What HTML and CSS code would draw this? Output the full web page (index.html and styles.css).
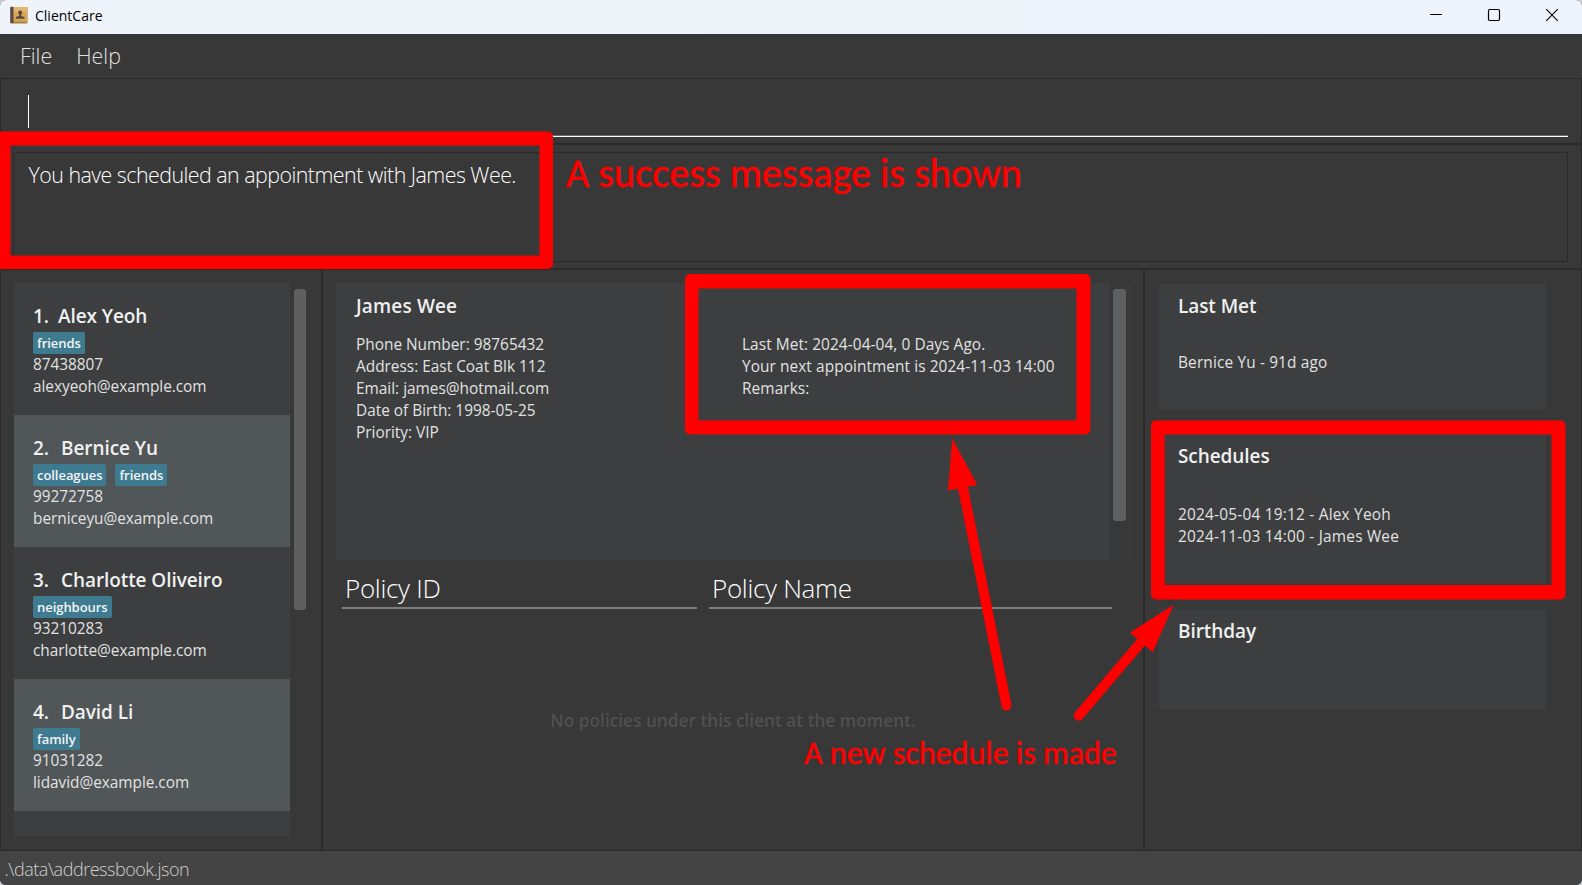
FILE: index.html
```html
<!DOCTYPE html>
<html lang="en">
<head>
<meta charset="utf-8">
<title>ClientCare</title>
<link rel="stylesheet" href="styles.css">
</head>
<body>
<div class="window">
  <header class="titlebar">
    <svg class="app-icon" width="18" height="18" viewBox="0 0 18 18">
      <rect x="0.5" y="1" width="17" height="16.5" rx="0.8" fill="#a87f45"/>
      <rect x="3" y="1" width="14.2" height="14.6" fill="#d9a657"/>
      <rect x="3" y="1" width="14.2" height="5" fill="#e3b56c"/>
      <rect x="0.3" y="0.8" width="3.2" height="16.2" fill="#574a47"/>
      <path d="M10.200 4.400c1.200 0 1.900.8 1.900 1.900 0 .9-.4 1.700-.9 2.100v1.500l3.300 1v1.900H5.900v-1.900l3.300-1V8.400c-.5-.4-.9-1.200-.9-2.100 0-1.100.7-1.900 1.900-1.900z" fill="#54493a"/>
    </svg>
    <span class="app-name">ClientCare</span>
    <div class="controls">
      <svg width="14" height="14" viewBox="0 0 14 14"><path d="M1 6.500h12" stroke="#000" fill="none"/></svg>
      <svg width="14" height="14" viewBox="0 0 14 14"><rect x="1.500" y="1.500" width="11" height="11" rx="1.200" stroke="#000" stroke-width="1.200" fill="none"/></svg>
      <svg width="14" height="14" viewBox="0 0 14 14"><path d="M1.200 1.200l11.600 11.600M12.800 1.200L1.200 12.800" stroke="#000" stroke-width="1.100" fill="none"/></svg>
    </div>
  </header>

  <nav class="menu"><span>File</span><span>Help</span></nav>

  <section class="command"><div class="command-field"><i class="caret"></i></div></section>

  <section class="result"><div class="result-box">You have scheduled an appointment with James Wee.</div></section>

  <main class="main">
    <section class="clients">
      <div class="client-list">
        <article class="client">
          <h2><span class="num num-narrow">1.</span>Alex Yeoh</h2>
          <div class="tags"><span>friends</span></div>
          <p>87438807</p><p>alexyeoh@example.com</p>
        </article>
        <article class="client alt">
          <h2><span class="num">2.</span>Bernice Yu</h2>
          <div class="tags"><span>colleagues</span><span>friends</span></div>
          <p>99272758</p><p>berniceyu@example.com</p>
        </article>
        <article class="client">
          <h2><span class="num">3.</span>Charlotte Oliveiro</h2>
          <div class="tags"><span>neighbours</span></div>
          <p>93210283</p><p>charlotte@example.com</p>
        </article>
        <article class="client alt">
          <h2><span class="num">4.</span>David Li</h2>
          <div class="tags"><span>family</span></div>
          <p>91031282</p><p>lidavid@example.com</p>
        </article>
        <article class="client"></article>
      </div>
      <div class="thumb"></div>
    </section>

    <section class="center">
      <div class="detail-row">
        <div class="detail">
          <h2>James Wee</h2>
          <div class="detail-cols">
            <div>
              <p>Phone Number: 98765432</p>
              <p>Address: East Coat Blk 112</p>
              <p>Email: james@hotmail.com</p>
              <p>Date of Birth: 1998-05-25</p>
              <p>Priority: VIP</p>
            </div>
            <div class="meeting">
              <p>Last Met: 2024-04-04, 0 Days Ago.</p>
              <p>Your next appointment is 2024-11-03 14:00</p>
              <p>Remarks:</p>
            </div>
          </div>
        </div>
        <div class="detail-scroll"><div class="thumb"></div></div>
      </div>
      <div class="table-head"><span>Policy ID</span><span>Policy Name</span></div>
      <div class="placeholder">No policies under this client at the moment.</div>
    </section>

    <aside class="side">
      <div class="card last-met"><h2>Last Met</h2><p>Bernice Yu - 91d ago</p></div>
      <div class="card schedules"><h2>Schedules</h2><p>2024-05-04 19:12 - Alex Yeoh</p><p>2024-11-03 14:00 - James Wee</p></div>
      <div class="card birthday"><h2>Birthday</h2></div>
    </aside>
  </main>

  <footer class="status">.\data\addressbook.json</footer>

  <svg class="marks" width="1582" height="885" viewBox="0 0 1582 885">
    <g fill="#f00" fill-rule="evenodd">
      <path d="M0 131.500H548a5 5 0 0 1 5 5V264a5 5 0 0 1-5 5H0zM10.500 145.500V255.500H539.500V145.500z"/>
      <path d="M690 274H1085.500a5 5 0 0 1 5 5V429.500a5 5 0 0 1-5 5H690a5 5 0 0 1-5-5V279a5 5 0 0 1 5-5zM698.500 288.500V420.500H1076.500V288.500z"/>
      <path d="M1156 420.500H1560.500a5 5 0 0 1 5 5V594.500a5 5 0 0 1-5 5H1156a5 5 0 0 1-5-5V425.500a5 5 0 0 1 5-5zM1164.700 434.500V585H1551.500V434.500z"/>
      <path d="M952.300 438.500L977.400 485L948 490.500z"/>
      <path d="M1173.600 604.800L1152.700 652.200L1130 632.500z"/>
    </g>
    <g stroke="#f00" stroke-width="10" stroke-linecap="round">
      <path d="M1006.500 705.500L962 483"/>
      <path d="M1078.700 715.700L1142.500 640.500"/>
    </g>
  </svg>
  <div class="note note-success">A success message is shown</div>
  <div class="note note-schedule">A new schedule is made</div>
</div>
</body>
</html>
```
FILE: styles.css
```css
* { box-sizing: border-box; margin: 0; padding: 0; }

body {
  background: #c9cdd0;
  font-family: "Open Sans", "Noto Sans", sans-serif;
}

.window {
  position: relative;
  width: 1582px;
  height: 885px;
  display: flex;
  flex-direction: column;
  overflow: hidden;
  background: #383838;
  border-radius: 6px;
}

.titlebar {
  height: 34px;
  display: flex;
  align-items: flex-start;
  padding-left: 10px;
  background: linear-gradient(90deg, #eef4f9, #eef3fb);
}
.app-icon { margin-top: 6px; }
.app-name { margin-left: 7px; font-size: 14px; line-height: 31px; color: #000; }
.controls { display: flex; gap: 44px; margin: 8px 23px 0 auto; }
.controls svg { display: block; }

.menu {
  height: 45px;
  display: flex;
  gap: 24px;
  padding-left: 20px;
  border-bottom: 1px solid #2a2a2a;
  font-size: 21.400px;
  font-weight: 300;
  line-height: 43px;
  color: #e0e0e0;
}

.command {
  height: 66px;
  padding: 0 13px 0 12px;
  border: solid #2a2a2a;
  border-width: 0 1px 2px 1px;
}
.command-field {
  height: 58px;
  padding: 16px 0 0 14.500px;
  border-bottom: 1px solid #fff;
  box-shadow: inset 0 -1px 0 #6a6a6a;
}
.caret { display: block; width: 1.400px; height: 33px; background: #fff; }

.result {
  height: 125px;
  padding: 7px 13px 6px 12px;
  border: solid #2a2a2a;
  border-width: 0 1px 2px 1px;
}
.result-box {
  height: 110px;
  padding: 7px 0 0 14.500px;
  border: 1px solid #2a2a2a;
  font-size: 21.400px;
  font-weight: 300;
  line-height: 30px;
  letter-spacing: -0.530px;
  color: #fff;
}

.main {
  height: 581px;
  display: grid;
  grid-template-columns: 323px 822px 1fr;
  border-bottom: 1px solid #2a2a2a;
}

h2 { font-size: 19px; font-weight: 600; line-height: 27px; color: #f0f0f0; letter-spacing: -0.080px; }
p { font-size: 15.400px; line-height: 22px; color: #e2e2e2; }

.clients {
  display: flex;
  gap: 4px;
  padding: 13px 0 0 13px;
  border: solid #2a2a2a;
  border-width: 0 2px 0 1px;
}
.client-list { width: 276px; height: 553px; overflow: hidden; }
.client { height: 132px; padding: 20px 0 0 19px; background: #3c3e3f; }
.client p { letter-spacing: -0.040px; }
.client.alt { background: #515658; }
.num { display: inline-block; width: 28px; }
.num-narrow { width: 25px; }
.tags { display: flex; gap: 9px; height: 22px; margin-top: 2px; }
.tags span {
  height: 22px;
  padding: 0 4px;
  border-radius: 2px;
  background: #3e7b91;
  color: #f4f4f4;
  font-size: 13px;
  font-weight: 600;
  line-height: 22px;
  letter-spacing: -0.050px;
}
.thumb { width: 12px; height: 321px; margin-top: 6px; border-radius: 3px; background: #5f5f5f; }

.center { padding: 13px 13px 0 13px; border-right: 2px solid #2a2a2a; }
.detail-row { display: flex; width: 794px; height: 277px; border-right: 1px solid #3c3e3f; }
.detail { width: 774px; padding: 10px 0 0 20px; background: #3c3e3f; }
.detail h2 { letter-spacing: 0.150px; }
.detail-cols { display: grid; grid-template-columns: 386px 1fr; margin-top: 14px; }
.meeting p { letter-spacing: 0.080px; }
.detail-scroll { padding-left: 3px; }
.detail-scroll .thumb { width: 13px; height: 232px; }

.table-head {
  display: grid;
  grid-template-columns: 355px 403px;
  gap: 12px;
  margin-left: 6px;
  font-size: 26px;
  font-weight: 300;
  line-height: 36px;
  letter-spacing: -0.300px;
  color: #fff;
}
.table-head span { height: 49px; padding: 10px 0 0 3px; border-bottom: 2px solid #7d7d7d; }
.placeholder {
  margin-top: 99px;
  text-align: center;
  font-size: 17.200px;
  font-weight: 600;
  line-height: 26px;
  letter-spacing: 0.030px;
  color: #505050;
}

.side {
  display: flex;
  flex-direction: column;
  gap: 25px;
  padding: 14px 0 0 14px;
  border-right: 1px solid #2a2a2a;
}
.card { width: 387px; padding: 9px 0 0 19px; background: #3c3e3f; }
.card p { letter-spacing: 0.220px; }
.last-met { height: 125px; }
.last-met p { margin-top: 32px; letter-spacing: 0.150px; }
.schedules { height: 150px; }
.schedules h2 { margin-bottom: 34px; }
.birthday { height: 100px; }

.status {
  height: 34px;
  padding: 1px 0 0 4.500px;
  background: #444;
  font-size: 18px;
  font-weight: 300;
  line-height: 34px;
  letter-spacing: -0.470px;
  color: #d0d0d0;
}

/* Annotations drawn over the window */
.marks { position: absolute; left: 0; top: 0; }
.note {
  position: absolute;
  font-family: Carlito, Lato, sans-serif;
  line-height: 1;
  white-space: nowrap;
  color: #f00;
  -webkit-text-stroke: 0.500px #f00;
}
.note-success { left: 566px; top: 154px; font-size: 40.200px; }
.note-schedule { left: 804px; top: 736.500px; font-size: 32.100px; }
```
